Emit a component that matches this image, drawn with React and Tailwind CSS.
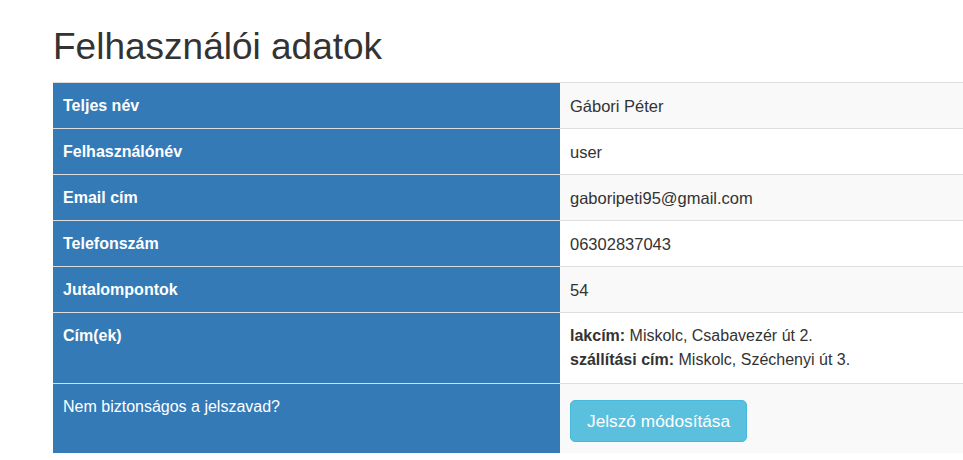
export default function App() {
  const rows = [
    { label: "Teljes név", value: "Gábori Péter" },
    { label: "Felhasználónév", value: "user" },
    { label: "Email cím", value: "gaboripeti95@gmail.com" },
    { label: "Telefonszám", value: "06302837043" },
    { label: "Jutalompontok", value: "54" },
  ];

  return (
    <div
      className="bg-white text-[#333] pl-[53px]"
      style={{ fontFamily: '"Liberation Sans", Arial, sans-serif' }}
    >
      <h1 className="text-[37px] leading-[40px] pt-[27px] pb-[15px] font-normal">Felhasználói adatok</h1>

      <div className="grid grid-cols-[507px_1fr] text-[16px] leading-[24px]">
        {rows.map((r, i) => (
          <Row key={r.label} striped={i % 2 === 0} valueSize="text-[16.5px]" label={<strong>{r.label}</strong>}>
            {r.value}
          </Row>
        ))}
        <Row striped={false} tall label={<strong>Cím(ek)</strong>}>
          <strong>lakcím:</strong> Miskolc, Csabavezér út 2.
          <br />
          <strong>szállítási cím:</strong> Miskolc, Széchenyi út 3.
        </Row>
        <Row striped tall last label="Nem biztonságos a jelszavad?">
          <button className="block mt-[5px] bg-[#5bc0de] border border-[#46b8da] text-white text-[17.3px] leading-[24px] px-[16px] py-[8px] rounded-[5px]">
            Jelszó módosítása
          </button>
        </Row>
      </div>
    </div>
  );
}

function Row({ label, children, striped, tall, valueSize = "text-[16px]" }) {
  const pad = tall ? "pl-[10px] pt-[11px] pb-[11px]" : "pl-[10px] pt-[11px] pb-[10px]";
  return (
    <>
      <div className={`bg-[#337ab7] text-white border-t border-[#ddd] ${pad}`}>{label}</div>
      <div className={`${striped ? "bg-[#f9f9f9]" : "bg-white"} ${valueSize} border-t border-[#ddd] ${pad}`}>
        {children}
      </div>
    </>
  );
}
